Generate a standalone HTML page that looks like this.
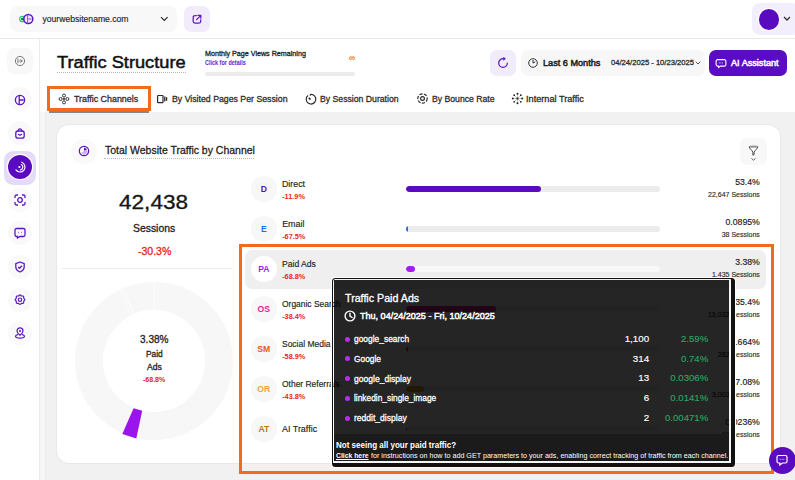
<!DOCTYPE html>
<html><head><meta charset="utf-8">
<style>
*{box-sizing:border-box;margin:0;padding:0}
html,body{width:795px;height:480px;overflow:hidden;background:#fff;font-family:"Liberation Sans",sans-serif;color:#1d1d1f}
.a{position:absolute}
.nw{white-space:nowrap;line-height:1;transform-origin:0 0}
</style></head><body>

<!-- main grey background -->
<div class="a" style="left:40px;top:112px;width:755px;height:368px;background:#f1f1f1"></div>
<div class="a" style="left:40px;top:112px;width:6px;height:368px;background:#f6f6f6;border-right:1px solid #ebebeb"></div>
<!-- header -->
<div class="a" style="left:0;top:0;width:795px;height:39px;background:#fff;border-bottom:1px solid #e9e9e9"></div>
<!-- sidebar -->
<div class="a" style="left:0;top:39px;width:40px;height:441px;background:#fff;border-right:1px solid #ececec"></div>

<!-- site selector -->
<div class="a" style="left:10px;top:6px;width:167px;height:26px;border-radius:8px;background:#f8f8f8"></div>
<svg class="a" style="left:17px;top:12px" width="18" height="14" viewBox="0 0 18 14">
  <circle cx="5.5" cy="7" r="2.8" fill="#fff" stroke="#2dbb6a" stroke-width="1.1"/>
  <circle cx="5.5" cy="7" r="1.6" fill="#13863f"/>
  <circle cx="11.3" cy="7" r="4.5" fill="#efe6fc" stroke="#5d14c8" stroke-width="1.5"/>
  <path d="M10.6 2.8v8.4M10.6 7h4" stroke="#8d55e0" stroke-width="1"/>
</svg>
<svg class="a" style="left:159.8px;top:15.5px" width="9" height="6" viewBox="0 0 9 6"><path d="M1 1.2l3.3 3.2 3.3-3.2" fill="none" stroke="#222" stroke-width="1.1"/></svg>
<div class="a" style="left:184px;top:6px;width:26px;height:26px;border-radius:7px;background:#f1ebfc"></div>
<svg class="a" style="left:192px;top:14px" width="10" height="10" viewBox="0 0 10 10"><path d="M4.3 1.5H3A1.8 1.8 0 0 0 1.2 3.3v3.9A1.8 1.8 0 0 0 3 9h3.9A1.8 1.8 0 0 0 8.7 7.2V5.8M4.6 5.6 8.6 1.6M5.9 1.3h2.9v2.9" fill="none" stroke="#5b17c4" stroke-width="1.25" stroke-linecap="round" stroke-linejoin="round"/></svg>

<!-- avatar -->
<div class="a" style="left:752px;top:3px;width:48px;height:32px;border-radius:8px;background:#f3eefc"></div>
<div class="a" style="left:758.5px;top:9px;width:20.5px;height:20.5px;border-radius:50%;background:#5a0bbf;box-shadow:0 0 0 1.3px #fff"></div>
<svg class="a" style="left:783px;top:16px" width="8" height="5" viewBox="0 0 8 5"><path d="M1 1l3 3 3-3" fill="none" stroke="#333" stroke-width="1.3"/></svg>


<!-- sidebar icons -->
<div class="a" style="left:7px;top:48px;width:26px;height:26px;border-radius:8px;background:#f8f8f8"></div>
<svg class="a" style="left:14px;top:55px" width="12" height="12" viewBox="0 0 12 12"><circle cx="6" cy="6" r="4.6" fill="none" stroke="#7a7a7a" stroke-width="1"/><path d="M3.9 3.6v4.8" stroke="#7a7a7a" stroke-width="1"/><path d="M5.2 6h3M6.8 4.6 8.2 6 6.8 7.4" fill="none" stroke="#7a7a7a" stroke-width="1" stroke-linecap="round" stroke-linejoin="round"/></svg>

<div class="a" style="left:8px;top:87px;width:24px;height:24px;border-radius:50%;background:#f9f9f9"></div>
<svg class="a" style="left:14px;top:93.8px" width="12" height="12" viewBox="0 0 12 12"><circle cx="6" cy="6" r="4.6" fill="none" stroke="#5b17c4" stroke-width="1.35"/><path d="M5.2 1.4V10.6M5.2 6h4.4" stroke="#5b17c4" stroke-width="1.3"/></svg>

<div class="a" style="left:8px;top:121px;width:24px;height:24px;border-radius:50%;background:#f9f9f9"></div>
<svg class="a" style="left:14px;top:126.5px" width="12" height="13" viewBox="0 0 12 13"><rect x="1.8" y="4" width="8.4" height="7.2" rx="2.2" fill="none" stroke="#5b17c4" stroke-width="1.3"/><path d="M4.2 4.2V3.6a1.8 1.8 0 0 1 3.6 0v.6M4.3 7.3 6 8.3l1.7-1" fill="none" stroke="#5b17c4" stroke-width="1.15" stroke-linecap="round"/></svg>

<div class="a" style="left:4px;top:150.5px;width:32px;height:34px;border-radius:9px;background:#e5dbf8"></div>
<div class="a" style="left:8px;top:154.8px;width:24px;height:24px;border-radius:50%;background:#5a0bbf;box-shadow:0 0 0 1.2px #fff"></div>
<svg class="a" style="left:12px;top:158.8px" width="16" height="16" viewBox="0 0 16 16"><path d="M9.7 3.3A5 5 0 1 1 3.9 10.9" fill="none" stroke="#fff" stroke-width="1.2" stroke-linecap="round"/><path d="M9.4 5.6A2.8 2.8 0 0 1 8.5 10.8" fill="none" stroke="#fff" stroke-width="1.2" stroke-linecap="round"/><circle cx="7.4" cy="8" r="1.1" fill="#fff"/></svg>

<div class="a" style="left:8px;top:188px;width:24px;height:24px;border-radius:50%;background:#f9f9f9"></div>
<svg class="a" style="left:14px;top:194px" width="12" height="12" viewBox="0 0 12 12"><path d="M1 4V2.5A1.5 1.5 0 0 1 2.5 1H4M8 1h1.5A1.5 1.5 0 0 1 11 2.5V4M11 8v1.5A1.5 1.5 0 0 1 9.5 11H8M4 11H2.5A1.5 1.5 0 0 1 1 9.5V8" fill="none" stroke="#5b17c4" stroke-width="1.3"/><circle cx="6" cy="6" r="2.3" fill="none" stroke="#5b17c4" stroke-width="1.3"/></svg>

<div class="a" style="left:8px;top:221px;width:24px;height:24px;border-radius:50%;background:#f9f9f9"></div>
<svg class="a" style="left:14px;top:227px" width="12" height="12" viewBox="0 0 12 12"><path d="M2.5 1.5h7a1.5 1.5 0 0 1 1.5 1.5v5a1.5 1.5 0 0 1-1.5 1.5H6L3.5 11V9.5h-1A1.5 1.5 0 0 1 1 8V3a1.5 1.5 0 0 1 1.5-1.5z" fill="none" stroke="#5b17c4" stroke-width="1.3"/><path d="M4 5.5h.5M7.5 5.5H8" stroke="#5b17c4" stroke-width="1.3"/></svg>

<div class="a" style="left:8px;top:255px;width:24px;height:24px;border-radius:50%;background:#f9f9f9"></div>
<svg class="a" style="left:14px;top:261px" width="12" height="12" viewBox="0 0 12 12"><path d="M6 1l4.2 1.6v3.2c0 2.6-1.8 4.4-4.2 5.2C3.6 10.2 1.8 8.4 1.8 5.8V2.6z" fill="none" stroke="#5b17c4" stroke-width="1.3" stroke-linejoin="round"/><path d="M4.2 6l1.3 1.3L8 4.8" fill="none" stroke="#5b17c4" stroke-width="1.3"/></svg>

<div class="a" style="left:8px;top:288px;width:24px;height:24px;border-radius:50%;background:#f9f9f9"></div>
<svg class="a" style="left:14px;top:294px" width="12" height="12" viewBox="0 0 12 12"><path d="M6 .9c.7 0 1 .9 1.6 1.1.6.2 1.4-.3 1.9.2s0 1.3.2 1.9c.2.6 1.1.9 1.1 1.6s-.9 1-1.1 1.6c-.2.6.3 1.4-.2 1.9s-1.3 0-1.9.2c-.6.2-.9 1.1-1.6 1.1s-1-.9-1.6-1.1c-.6-.2-1.4.3-1.9-.2s0-1.3-.2-1.9C2.1 6.7 1.2 6.4 1.2 5.7s.9-1 1.1-1.6c.2-.6-.3-1.4.2-1.9s1.3 0 1.9-.2C5 1.8 5.3.9 6 .9z" fill="none" stroke="#5b17c4" stroke-width="1.2" stroke-linejoin="round"/><circle cx="6" cy="5.7" r="1.7" fill="none" stroke="#5b17c4" stroke-width="1.2"/></svg>

<div class="a" style="left:8px;top:321px;width:24px;height:24px;border-radius:50%;background:#f9f9f9"></div>
<svg class="a" style="left:14px;top:327px" width="12" height="12" viewBox="0 0 12 12"><path d="M6 8.3S3 5.9 3 3.9a3 3 0 0 1 6 0c0 2-3 4.4-3 4.4z" fill="none" stroke="#5b17c4" stroke-width="1.2" stroke-linejoin="round"/><circle cx="6" cy="3.9" r="1" fill="#5b17c4"/><path d="M3.6 7.6C2.2 8 1.5 8.6 1.5 9.3c0 1 2 1.8 4.5 1.8s4.5-.8 4.5-1.8c0-.7-.7-1.3-2.1-1.7" fill="none" stroke="#5b17c4" stroke-width="1.2" stroke-linecap="round"/></svg>

<!-- title -->
<div class="a" style="left:57px;top:72px;width:129px;border-top:1px dotted #b9b9b9"></div>

<!-- monthly widget -->
<div class="a" style="left:205px;top:72px;width:150px;height:4px;border-radius:2px;background:#ebebeb"></div>

<!-- right controls -->
<div class="a" style="left:490px;top:50px;width:26px;height:26px;border-radius:7px;background:#f1ebfc"></div>
<svg class="a" style="left:496.7px;top:57.2px" width="12" height="12" viewBox="0 0 12 12"><path d="M6 1.7A4.3 4.3 0 1 0 10.3 6" fill="none" stroke="#5b17c4" stroke-width="1.2" stroke-linecap="round"/><path d="M6.6 .4 8.4 1.8 6.6 3.2z" fill="#5b17c4" stroke="#5b17c4" stroke-width=".8" stroke-linejoin="round"/></svg>
<div class="a" style="left:521px;top:50px;width:184px;height:26px;border-radius:7px;background:#f7f7f7"></div>
<svg class="a" style="left:526.5px;top:56.8px" width="12" height="12" viewBox="0 0 12 12"><circle cx="6" cy="6" r="4.3" fill="none" stroke="#333" stroke-width="1"/><path d="M6 3.4V6.1L7.9 5" fill="none" stroke="#333" stroke-width="1" stroke-linecap="round" stroke-linejoin="round"/></svg>
<svg class="a" style="left:695px;top:61px" width="6" height="4" viewBox="0 0 6 4"><path d="M.7.7 3 3 5.3.7" fill="none" stroke="#444" stroke-width=".9"/></svg>
<div class="a" style="left:709px;top:49.6px;width:78px;height:26.4px;border-radius:7px;background:#5a0cc4"></div>
<svg class="a" style="left:715px;top:57.5px" width="12" height="11" viewBox="0 0 12 11"><path d="M2.7 1.6h6.6A1.6 1.6 0 0 1 10.9 3.2v3.3A1.6 1.6 0 0 1 9.3 8.1H5.2L3.6 9.6V8.1h-.9A1.6 1.6 0 0 1 1.1 6.5V3.2a1.6 1.6 0 0 1 1.6-1.6z" fill="none" stroke="#fff" stroke-width="1.1" stroke-linejoin="round"/><path d="M3.8 4.9h4.4" stroke="#d8c8f5" stroke-width=".9" stroke-dasharray="1 .6"/></svg>


<!-- tab icons -->
<svg class="a" style="left:58px;top:93px" width="12" height="12" viewBox="0 0 12 12" fill="none" stroke="#333" stroke-width="1"><circle cx="6" cy="2.6" r="1.5"/><circle cx="6" cy="9.4" r="1.5"/><circle cx="2.6" cy="6" r="1.5"/><circle cx="9.4" cy="6" r="1.5"/><rect x="4.9" y="4.9" width="2.2" height="2.2" fill="#555" stroke="none"/></svg>
<svg class="a" style="left:156px;top:94px" width="13" height="10" viewBox="0 0 13 10" fill="none" stroke="#2a2a2a"><rect x="1.6" y="1.5" width="5.4" height="7.2" rx=".6" stroke-width="1.2"/><path d="M8.8 2.6V7.4M10.6 3.2V6.8" stroke-width="1.3"/></svg>
<svg class="a" style="left:303.5px;top:92.6px" width="13" height="13" viewBox="0 0 13 13" fill="none" stroke="#2a2a2a" stroke-width="1.15"><path d="M4 2.5A4.8 4.8 0 1 0 6.3 1.5"/><path d="M6.3 1.2v1.5" /><path d="M4.7 4.8 6.5 6.6" stroke-width="1.5"/></svg>
<svg class="a" style="left:415.6px;top:92.4px" width="13" height="13" viewBox="0 0 13 13" fill="none" stroke="#2a2a2a" stroke-width="1.2"><circle cx="6.5" cy="6.5" r="4.7" stroke-dasharray="3.2 1.4"/><circle cx="6.5" cy="6.5" r="1.9"/></svg>
<svg class="a" style="left:510.6px;top:92.4px" width="13" height="13" viewBox="0 0 13 13" fill="none" stroke="#aaa" stroke-width=".7"><path d="M6.5 1.5v10M1.5 6.5h10M3 3l7 7M10 3l-7 7"/><g fill="#222" stroke="none"><circle cx="6.5" cy="1.8" r="1"/><circle cx="6.5" cy="11.2" r="1"/><circle cx="1.8" cy="6.5" r="1"/><circle cx="11.2" cy="6.5" r="1"/><circle cx="3.2" cy="3.2" r=".9"/><circle cx="9.8" cy="3.2" r=".9"/><circle cx="3.2" cy="9.8" r=".9"/><circle cx="9.8" cy="9.8" r=".9"/><rect x="5.6" y="5.6" width="1.8" height="1.8"/></g></svg>

<!-- card -->
<div class="a" style="left:57px;top:125px;width:723px;height:338px;border-radius:12px;background:#fff;box-shadow:0 0 0 1px #e8e8e8"></div>
<div class="a" style="left:71px;top:138.5px;width:25.5px;height:25.5px;border-radius:50%;background:#f9f9f9"></div>
<svg class="a" style="left:78px;top:145px" width="12" height="12" viewBox="0 0 12 12"><circle cx="6" cy="6" r="4.7" fill="none" stroke="#5b12c8" stroke-width="1.2"/><path d="M6 6V2.8A3.2 3.2 0 0 1 8.9 4.6z" fill="#5b12c8"/><path d="M6 6 8.9 4.6A3.2 3.2 0 0 1 3.3 8z" fill="#c9b2f2"/></svg>
<div class="a" style="left:104px;top:158px;width:150px;border-top:1px dotted #bdbdbd"></div>
<div class="a" style="left:740px;top:137.5px;width:26.5px;height:27px;border-radius:7px;background:#f8f8f8"></div>
<svg class="a" style="left:747px;top:144px" width="13" height="19" viewBox="0 0 13 19"><path d="M2.2 2.9C2.2 2 10.8 2 10.8 2.9 10.8 4.3 7.8 6.4 7.1 8.2V10.6L5.9 11.2V8.2C5.2 6.4 2.2 4.3 2.2 2.9z" fill="#fff" stroke="#444" stroke-width="1" stroke-linejoin="round"/><ellipse cx="6.5" cy="3.1" rx="3.8" ry=".9" fill="#aaa"/><path d="M4.4 14.4l2.1 1.8 2.1-1.8" fill="none" stroke="#555" stroke-width=".9"/></svg>
<div class="a" style="left:62px;top:268px;width:170px;height:1px;background:#ebebeb"></div>

<!-- donut -->
<svg class="a" style="left:0;top:0" width="240" height="462" viewBox="0 0 240 462">
  <circle cx="154" cy="361" r="65" fill="none" stroke="#f7f7f7" stroke-width="28"/>
  <path d="M154 281.5V310" stroke="#fff" stroke-width=".8"/>
  <path d="M122.5 288 134 314.5" stroke="#fff" stroke-width=".8"/>
  <path d="M119.3 289.5 130.8 316" stroke="#fff" stroke-width=".6"/>
  <path d="M136.3 438.6 142.2 410.7 133.6 408.2 122.3 434.1z" fill="#9b14ec"/>
</svg>

<!-- paid ads highlight -->
<div class="a" style="left:245px;top:249.5px;width:521px;height:39px;border-radius:7px;background:#efefef"></div>
<div class="a" style="left:250.8px;top:175.8px;width:26px;height:26px;border-radius:50%;background:#f7f7f7;color:#5a0bbf;font-size:8.6px;font-weight:bold;line-height:26px;text-align:center">D</div>
<div class="a" style="left:406px;top:185.55px;width:254px;height:6.5px;border-radius:3.25px;background:#ececec;overflow:hidden"><div style="width:135.3px;height:100%;border-radius:3.25px;background:#5a0bbf"></div></div>
<div class="a" style="left:250.8px;top:215.8px;width:26px;height:26px;border-radius:50%;background:#f7f7f7;color:#1f6fe5;font-size:8.6px;font-weight:bold;line-height:26px;text-align:center">E</div>
<div class="a" style="left:406px;top:225.55px;width:254px;height:6.5px;border-radius:3.25px;background:#ececec;overflow:hidden"><div style="width:1.5px;height:100%;border-radius:3.25px;background:#1f6fe5"></div></div>
<div class="a" style="left:250.8px;top:255.8px;width:26px;height:26px;border-radius:50%;background:#fff;color:#a01ff0;font-size:8.6px;font-weight:bold;line-height:26px;text-align:center">PA</div>
<div class="a" style="left:406px;top:265.55px;width:254px;height:6.5px;border-radius:3.25px;background:#f9f9f9;overflow:hidden"><div style="width:8.6px;height:100%;border-radius:3.25px;background:#a01ff0"></div></div>
<div class="a" style="left:250.8px;top:295.8px;width:26px;height:26px;border-radius:50%;background:#f7f7f7;color:#e0249a;font-size:8.6px;font-weight:bold;line-height:26px;text-align:center">OS</div>
<div class="a" style="left:406px;top:305.55px;width:254px;height:6.5px;border-radius:3.25px;background:#ececec;overflow:hidden"><div style="width:90px;height:100%;border-radius:3.25px;background:#e0249a"></div></div>
<div class="a" style="left:250.8px;top:335.8px;width:26px;height:26px;border-radius:50%;background:#f7f7f7;color:#e8561d;font-size:8.6px;font-weight:bold;line-height:26px;text-align:center">SM</div>
<div class="a" style="left:406px;top:345.55px;width:254px;height:6.5px;border-radius:3.25px;background:#ececec;overflow:hidden"><div style="width:1.7px;height:100%;border-radius:3.25px;background:#e8561d"></div></div>
<div class="a" style="left:250.8px;top:375.8px;width:26px;height:26px;border-radius:50%;background:#f7f7f7;color:#f4a628;font-size:8.6px;font-weight:bold;line-height:26px;text-align:center">OR</div>
<div class="a" style="left:406px;top:385.55px;width:254px;height:6.5px;border-radius:3.25px;background:#ececec;overflow:hidden"><div style="width:18px;height:100%;border-radius:3.25px;background:#f4a628"></div></div>
<div class="a" style="left:250.8px;top:415.8px;width:26px;height:26px;border-radius:50%;background:#f7f7f7;color:#b3781e;font-size:8.6px;font-weight:bold;line-height:26px;text-align:center">AT</div>
<div class="a" style="left:406px;top:425.55px;width:254px;height:6.5px;border-radius:3.25px;background:#ececec;overflow:hidden"><div style="width:0.6px;height:100%;border-radius:3.25px;background:#b3781e"></div></div>

<!-- orange frames -->
<div class="a" style="left:49px;top:111.2px;width:100px;height:1.6px;background:#7d8894"></div>
<div class="a" style="left:47px;top:86px;width:103.5px;height:25.2px;border:3px solid #f26b1d"></div>
<div class="a" style="left:238.5px;top:244px;width:535.5px;height:230px;border:3px solid #f26b1d"></div>

<div class="a nw" style="left:42.50px;top:14.72px;font-size:8.6px;color:#1f1f1f;-webkit-text-stroke:0.15px currentColor;">yourwebsitename.com</div>
<div class="a nw" style="left:57.20px;top:54.04px;font-size:17.2px;color:#111;-webkit-text-stroke:0.5px currentColor;transform:scaleX(1.0601);">Traffic Structure</div>
<div class="a nw" style="left:205.10px;top:50.14px;font-size:7.4px;color:#222;-webkit-text-stroke:0.3px currentColor;transform:scaleX(0.9682);">Monthly Page Views Remaining</div>
<div class="a nw" style="left:205.10px;top:59.78px;font-size:6.4px;color:#6a16c8;font-weight:700;transform:scaleX(0.8573);">Click for details</div>
<div class="a nw" style="left:542.70px;top:57.77px;font-size:9.6px;color:#1b1b1b;-webkit-text-stroke:0.5px currentColor;transform:scaleX(0.9508);">Last 6 Months</div>
<div class="a nw" style="left:611.00px;top:58.73px;font-size:8px;color:#2a2a2a;-webkit-text-stroke:0.3px currentColor;transform:scaleX(0.9520);">04/24/2025 - 10/23/2025</div>
<div class="a nw" style="left:731.40px;top:57.77px;font-size:9.6px;color:#fff;-webkit-text-stroke:0.5px currentColor;transform:scaleX(0.9496);">AI Assistant</div>
<div class="a nw" style="left:74.20px;top:93.96px;font-size:9.5px;color:#2b2b2b;-webkit-text-stroke:0.3px currentColor;transform:scaleX(0.9336);">Traffic Channels</div>
<div class="a nw" style="left:171.50px;top:93.96px;font-size:9.5px;color:#2b2b2b;-webkit-text-stroke:0.3px currentColor;transform:scaleX(0.9202);">By Visited Pages Per Session</div>
<div class="a nw" style="left:319.80px;top:93.96px;font-size:9.5px;color:#2b2b2b;-webkit-text-stroke:0.3px currentColor;transform:scaleX(0.9131);">By Session Duration</div>
<div class="a nw" style="left:431.50px;top:93.96px;font-size:9.5px;color:#2b2b2b;-webkit-text-stroke:0.3px currentColor;transform:scaleX(0.9103);">By Bounce Rate</div>
<div class="a nw" style="left:526.40px;top:93.96px;font-size:9.5px;color:#2b2b2b;-webkit-text-stroke:0.3px currentColor;transform:scaleX(0.9645);">Internal Traffic</div>
<div class="a nw" style="left:104.50px;top:145.37px;font-size:11.5px;color:#1d1d1d;-webkit-text-stroke:0.3px currentColor;transform:scaleX(0.9112);">Total Website Traffic by Channel</div>
<div class="a nw" style="left:119.20px;top:191.62px;font-size:20.3px;color:#151515;-webkit-text-stroke:0.3px currentColor;transform:scaleX(1.1137);">42,438</div>
<div class="a nw" style="left:132.80px;top:222.73px;font-size:10.6px;color:#222;-webkit-text-stroke:0.3px currentColor;transform:scaleX(0.9814);">Sessions</div>
<div class="a nw" style="left:137.50px;top:247.20px;font-size:10.4px;color:#e5261b;-webkit-text-stroke:0.3px currentColor;transform:scaleX(1.0110);">-30.3%</div>
<div class="a nw" style="left:139.90px;top:335.48px;font-size:10.3px;color:#222;-webkit-text-stroke:0.3px currentColor;transform:scaleX(0.9759);">3.38%</div>
<div class="a nw" style="left:145.70px;top:350.12px;font-size:8.6px;color:#222;-webkit-text-stroke:0.3px currentColor;transform:scaleX(0.9708);">Paid</div>
<div class="a nw" style="left:146.70px;top:363.12px;font-size:8.6px;color:#222;-webkit-text-stroke:0.3px currentColor;transform:scaleX(1.0059);">Ads</div>
<div class="a nw" style="left:142.70px;top:376.27px;font-size:7.0px;color:#e5261b;font-weight:700;transform:scaleX(1.0051);">-68.8%</div>
<div class="a nw" style="left:282.20px;top:179.57px;font-size:8.9px;color:#222;-webkit-text-stroke:0.15px currentColor;transform:scaleX(0.9919);">Direct</div>
<div class="a nw" style="left:282.20px;top:192.72px;font-size:7.3px;color:#e5261b;font-weight:700;">-11.9%</div>
<div class="a nw" style="right:35.20px;top:178.24px;font-size:8.7px;color:#1a1a1a;-webkit-text-stroke:0.15px currentColor;">53.4%</div>
<div class="a nw" style="right:35.20px;top:190.77px;font-size:7.0px;color:#2e2e2e;-webkit-text-stroke:0.15px currentColor;">22,647 Sessions</div>
<div class="a nw" style="left:282.20px;top:219.57px;font-size:8.9px;color:#222;-webkit-text-stroke:0.15px currentColor;">Email</div>
<div class="a nw" style="left:282.20px;top:232.72px;font-size:7.3px;color:#e5261b;font-weight:700;">-67.5%</div>
<div class="a nw" style="right:35.20px;top:218.24px;font-size:8.7px;color:#1a1a1a;-webkit-text-stroke:0.15px currentColor;">0.0895%</div>
<div class="a nw" style="right:35.20px;top:230.77px;font-size:7.0px;color:#2e2e2e;-webkit-text-stroke:0.15px currentColor;">38 Sessions</div>
<div class="a nw" style="left:282.20px;top:259.57px;font-size:8.9px;color:#222;-webkit-text-stroke:0.15px currentColor;transform:scaleX(0.9677);">Paid Ads</div>
<div class="a nw" style="left:282.20px;top:272.72px;font-size:7.3px;color:#e5261b;font-weight:700;">-68.8%</div>
<div class="a nw" style="right:35.20px;top:258.24px;font-size:8.7px;color:#1a1a1a;-webkit-text-stroke:0.15px currentColor;">3.38%</div>
<div class="a nw" style="right:35.20px;top:270.77px;font-size:7.0px;color:#2e2e2e;-webkit-text-stroke:0.15px currentColor;">1,435 Sessions</div>
<div class="a nw" style="left:282.20px;top:299.57px;font-size:8.9px;color:#222;-webkit-text-stroke:0.15px currentColor;transform:scaleX(0.9518);">Organic Search</div>
<div class="a nw" style="left:282.20px;top:312.72px;font-size:7.3px;color:#e5261b;font-weight:700;">-38.4%</div>
<div class="a nw" style="right:35.20px;top:298.24px;font-size:8.7px;color:#1a1a1a;-webkit-text-stroke:0.15px currentColor;">35.4%</div>
<div class="a nw" style="right:35.20px;top:310.77px;font-size:7.0px;color:#2e2e2e;-webkit-text-stroke:0.15px currentColor;">15,032 Sessions</div>
<div class="a nw" style="left:282.20px;top:339.57px;font-size:8.9px;color:#222;-webkit-text-stroke:0.15px currentColor;transform:scaleX(0.9545);">Social Media</div>
<div class="a nw" style="left:282.20px;top:352.72px;font-size:7.3px;color:#e5261b;font-weight:700;">-58.9%</div>
<div class="a nw" style="right:35.20px;top:338.24px;font-size:8.7px;color:#1a1a1a;-webkit-text-stroke:0.15px currentColor;">0.664%</div>
<div class="a nw" style="right:35.20px;top:350.77px;font-size:7.0px;color:#2e2e2e;-webkit-text-stroke:0.15px currentColor;">282 Sessions</div>
<div class="a nw" style="left:282.20px;top:379.57px;font-size:8.9px;color:#222;-webkit-text-stroke:0.15px currentColor;transform:scaleX(0.9527);">Other Referrals</div>
<div class="a nw" style="left:282.20px;top:392.72px;font-size:7.3px;color:#e5261b;font-weight:700;">-43.8%</div>
<div class="a nw" style="right:35.20px;top:378.24px;font-size:8.7px;color:#1a1a1a;-webkit-text-stroke:0.15px currentColor;">7.08%</div>
<div class="a nw" style="right:35.20px;top:390.77px;font-size:7.0px;color:#2e2e2e;-webkit-text-stroke:0.15px currentColor;">3,003 Sessions</div>
<div class="a nw" style="left:282.20px;top:424.57px;font-size:8.9px;color:#222;-webkit-text-stroke:0.15px currentColor;transform:scaleX(1.0069);">AI Traffic</div>
<div class="a nw" style="right:35.20px;top:418.24px;font-size:8.7px;color:#1a1a1a;-webkit-text-stroke:0.15px currentColor;">0.0236%</div>
<div class="a nw" style="right:35.20px;top:430.77px;font-size:7.0px;color:#2e2e2e;-webkit-text-stroke:0.15px currentColor;">10 Sessions</div>
<div class="a nw" style="left:345.30px;top:293.21px;font-size:10.5px;color:#fff;-webkit-text-stroke:0.3px currentColor;transform:scaleX(1.0171);z-index:6;">Traffic Paid Ads</div>
<div class="a nw" style="left:360.20px;top:311.10px;font-size:9.8px;color:#fff;-webkit-text-stroke:0.5px currentColor;transform:scaleX(0.9235);z-index:6;">Thu, 04/24/2025 - Fri, 10/24/2025</div>
<div class="a nw" style="left:354.00px;top:334.04px;font-size:9.4px;color:#fff;-webkit-text-stroke:0.3px currentColor;transform:scaleX(0.8973);z-index:6;">google_search</div>
<div class="a nw" style="right:145.80px;top:333.70px;font-size:9.8px;color:#fff;-webkit-text-stroke:0.15px currentColor;z-index:6;">1,100</div>
<div class="a nw" style="right:86.80px;top:333.87px;font-size:9.6px;color:#2ca35f;-webkit-text-stroke:0.15px currentColor;z-index:6;">2.59%</div>
<div class="a nw" style="left:354.00px;top:353.84px;font-size:9.4px;color:#fff;-webkit-text-stroke:0.3px currentColor;transform:scaleX(0.8930);z-index:6;">Google</div>
<div class="a nw" style="right:145.80px;top:353.50px;font-size:9.8px;color:#fff;-webkit-text-stroke:0.15px currentColor;z-index:6;">314</div>
<div class="a nw" style="right:86.80px;top:353.67px;font-size:9.6px;color:#2ca35f;-webkit-text-stroke:0.15px currentColor;z-index:6;">0.74%</div>
<div class="a nw" style="left:354.00px;top:373.64px;font-size:9.4px;color:#fff;-webkit-text-stroke:0.3px currentColor;transform:scaleX(0.9111);z-index:6;">google_display</div>
<div class="a nw" style="right:145.80px;top:373.30px;font-size:9.8px;color:#fff;-webkit-text-stroke:0.15px currentColor;z-index:6;">13</div>
<div class="a nw" style="right:86.80px;top:373.47px;font-size:9.6px;color:#2ca35f;-webkit-text-stroke:0.15px currentColor;z-index:6;">0.0306%</div>
<div class="a nw" style="left:354.00px;top:393.44px;font-size:9.4px;color:#fff;-webkit-text-stroke:0.3px currentColor;transform:scaleX(0.8911);z-index:6;">linkedin_single_image</div>
<div class="a nw" style="right:145.80px;top:393.10px;font-size:9.8px;color:#fff;-webkit-text-stroke:0.15px currentColor;z-index:6;">6</div>
<div class="a nw" style="right:86.80px;top:393.27px;font-size:9.6px;color:#2ca35f;-webkit-text-stroke:0.15px currentColor;z-index:6;">0.0141%</div>
<div class="a nw" style="left:354.00px;top:413.24px;font-size:9.4px;color:#fff;-webkit-text-stroke:0.3px currentColor;transform:scaleX(0.9108);z-index:6;">reddit_display</div>
<div class="a nw" style="right:145.80px;top:412.90px;font-size:9.8px;color:#fff;-webkit-text-stroke:0.15px currentColor;z-index:6;">2</div>
<div class="a nw" style="right:86.80px;top:413.07px;font-size:9.6px;color:#2ca35f;-webkit-text-stroke:0.15px currentColor;z-index:6;">0.00471%</div>
<div class="a nw" style="left:335.70px;top:439.87px;font-size:9.6px;color:#fff;font-weight:700;transform:scaleX(0.8375);z-index:6;">Not seeing all your paid traffic?</div>
<div class="a nw" style="left:335.70px;top:452.43px;font-size:8px;color:#fff;font-weight:700;transform:scaleX(0.8523);z-index:6;text-decoration:underline;">Click here</div>
<div class="a nw" style="left:370.70px;top:452.43px;font-size:8px;color:#fff;transform:scaleX(0.8935);z-index:6;">for instructions on how to add GET parameters to your ads, enabling correct tracking of traffic from each channel.</div>
<div class="a nw" style="left:348.80px;top:53.16px;font-size:9.5px;color:#f07a2a;font-weight:700;transform:scaleX(0.8848);">&#8734;</div>

<!-- tooltip -->
<div class="a" style="z-index:4;left:331px;top:277.3px;width:405.3px;height:190.7px;border-radius:4.5px;border:1px solid #fff"></div>
<div class="a" style="z-index:4;left:332px;top:278.3px;width:403.3px;height:188.7px;border-radius:3.5px;border-style:solid;border-color:#111;border-width:1.4px 4.5px 4.3px 1.5px"></div>
<div class="a" style="z-index:4;left:333.5px;top:279.7px;width:395.5px;height:154px;background:rgba(0,0,0,.853)"></div>
<div class="a" style="z-index:4;left:333.5px;top:433.5px;width:395.5px;height:28px;background:#1b1b1b"></div>
<div class="a" style="z-index:4;left:729px;top:282.5px;width:1.8px;height:180px;background:#f4f4f4"></div>
<div class="a" style="z-index:4;left:333.5px;top:461.2px;width:397.3px;height:1.5px;background:#f4f4f4"></div>
<svg class="a" style="z-index:6;left:343.5px;top:310px" width="12" height="12" viewBox="0 0 12 12"><circle cx="6" cy="6" r="4.9" fill="none" stroke="#fff" stroke-width="1.4"/><path d="M6 3.2V6.2L8.2 7.5" fill="none" stroke="#fff" stroke-width="1.4" stroke-linecap="round" stroke-linejoin="round"/></svg>
<div class="a" style="z-index:6;left:344.7px;top:336.5px;width:5px;height:5px;border-radius:50%;background:#b52ff2"></div>
<div class="a" style="z-index:6;left:344.7px;top:356.3px;width:5px;height:5px;border-radius:50%;background:#b52ff2"></div>
<div class="a" style="z-index:6;left:344.7px;top:376.1px;width:5px;height:5px;border-radius:50%;background:#b52ff2"></div>
<div class="a" style="z-index:6;left:344.7px;top:395.9px;width:5px;height:5px;border-radius:50%;background:#b52ff2"></div>
<div class="a" style="z-index:6;left:344.7px;top:415.7px;width:5px;height:5px;border-radius:50%;background:#b52ff2"></div>

<!-- chat bubble -->
<div class="a" style="z-index:8;left:768.5px;top:447px;width:27px;height:27px;border-radius:50%;background:#5a0bbf"></div>
<svg class="a" style="z-index:9;left:776px;top:454px" width="12" height="12" viewBox="0 0 12 12"><path d="M2.5 1.5h7A1.5 1.5 0 0 1 11 3v4.5A1.5 1.5 0 0 1 9.5 9H6.3L3.8 11V9H2.5A1.5 1.5 0 0 1 1 7.5V3a1.5 1.5 0 0 1 1.5-1.5z" fill="none" stroke="#fff" stroke-width="1.2"/><path d="M3.8 5.3h.6M5.8 5.3h.6M7.6 5.3h.6" stroke="#fff" stroke-width="1.2"/></svg>
</body></html>
